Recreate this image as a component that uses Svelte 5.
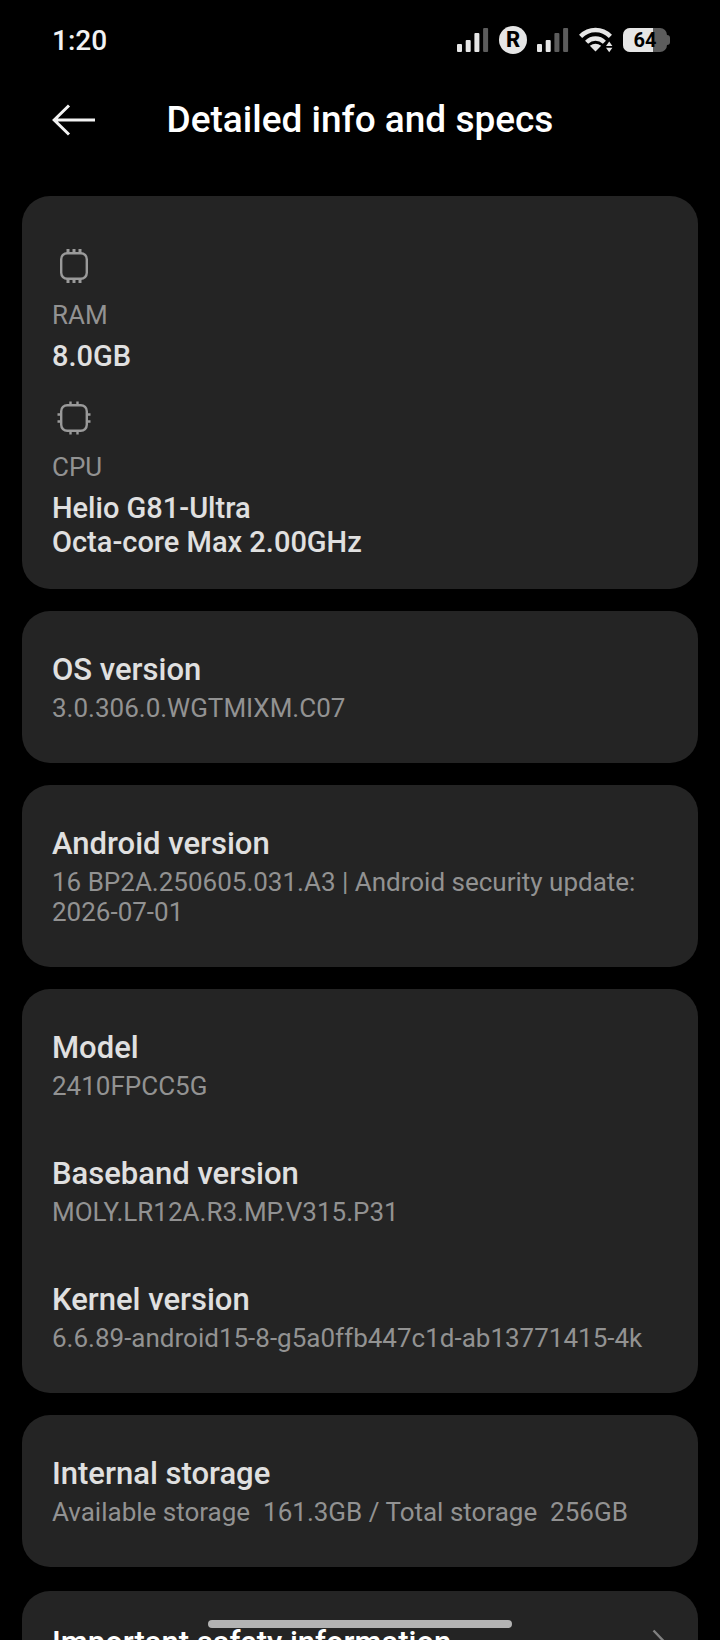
<script lang="ts">
    type Item = { title: string; value: string };

    const battery: number = 64;
    const signals: number[] = [3, 2];
    const barHeights: number[] = [8, 12, 19, 24];

    const cards: Item[][] = [
        [{ title: "OS version", value: "3.0.306.0.WGTMIXM.C07" }],
        [{ title: "Android version", value: "16 BP2A.250605.031.A3 | Android security update: 2026-07-01" }],
        [
            { title: "Model", value: "2410FPCC5G" },
            { title: "Baseband version", value: "MOLY.LR12A.R3.MP.V315.P31" },
            { title: "Kernel version", value: "6.6.89-android15-8-g5a0ffb447c1d-ab13771415-4k" }
        ],
        [{ title: "Internal storage", value: "Available storage  161.3GB / Total storage  256GB" }]
    ];
</script>

{#snippet signal(level: number)}
    <svg width="32" height="24" viewBox="0 0 32 24" aria-hidden="true">
        {#each barHeights as h, i}
            <rect x={i * 8.7} y={24 - h} width="5" height={h} rx="1" fill={i < level ? "#e6e6e6" : "#5c5c5c"} />
        {/each}
    </svg>
{/snippet}

<div class="screen">
    <div class="status">
        <span class="time">1:20</span>
        <div class="icons">
            {@render signal(signals[0])}
            <span class="roaming">R</span>
            {@render signal(signals[1])}
            <svg class="wifi" width="34" height="26" viewBox="0 0 34 26" aria-hidden="true">
                <g fill="none" stroke="#e6e6e6" stroke-width="4.4">
                    <path d="M1.6 9.4C10 0.9 23 0.9 31.4 9.4" />
                    <path d="M7.6 15.2C12.7 10.2 20.3 10.2 25.4 15.2" />
                </g>
                <path d="M16.5 24.4L10.8 18.8Q16.5 14.6 22.2 18.8Z" fill="#e6e6e6" />
                <path d="M30.5 12.5L36 20L30.5 26H28L24 20Z" fill="#000" />
                <path d="M30.2 14.6L33.4 19H27ZM27 20.8H33.4L30.2 25.2Z" fill="#e6e6e6" />
            </svg>
            <div class="battery">
                <div class="cell">
                    <div class="level" style="width: {battery + 4}%"></div>
                    <span class="percent">{battery}</span>
                </div>
                <div class="tip"></div>
            </div>
        </div>
    </div>

    <header>
        <button class="back" aria-label="Back">
            <svg width="44" height="32" viewBox="0 0 44 32" fill="none" stroke="#f2f2f2" stroke-width="3">
                <path d="M17 1.5L2.2 16L17 30.5M2.2 16H43" />
            </svg>
        </button>
        <h1>Detailed info and specs</h1>
    </header>

    <main>
        <section class="card specs">
            <div class="spec">
                <svg width="44" height="44" viewBox="0 0 44 44" fill="none" stroke="#9a9a9a" stroke-width="2.4" aria-hidden="true">
                    <rect x="9.2" y="9.2" width="25.6" height="25.6" rx="6" />
                    <path d="M16 5V9M22 5V9M28 5V9M16 35V39M22 35V39M28 35V39" stroke-width="3" />
                </svg>
                <p class="label">RAM</p>
                <p class="value">8.0GB</p>
            </div>
            <div class="spec">
                <svg width="44" height="44" viewBox="0 0 44 44" fill="none" stroke="#9a9a9a" stroke-width="2.4" aria-hidden="true">
                    <rect x="9.2" y="9.2" width="25.6" height="25.6" rx="6" />
                    <path d="M18.5 5.5V9M25.5 5.5V9M18.5 35V38.5M25.5 35V38.5M5.5 18.5H9M5.5 25.5H9M35 18.5H38.5M35 25.5H38.5" />
                </svg>
                <p class="label">CPU</p>
                <p class="value">Helio G81-Ultra<br />Octa-core Max 2.00GHz</p>
            </div>
        </section>

        {#each cards as items}
            <section class="card">
                {#each items as item}
                    <div class="item">
                        <h2>{item.title}</h2>
                        <p>{item.value}</p>
                    </div>
                {/each}
            </section>
        {/each}

        <a class="card link" href="#safety">
            <h2>Important safety information</h2>
            <svg width="16" height="28" viewBox="0 0 16 28" fill="none" stroke="#808080" stroke-width="2.4" aria-hidden="true">
                <path d="M1.5 1.5L13.5 14L1.5 26.5" />
            </svg>
        </a>
    </main>

    <div class="home-bar"></div>
</div>

<style>
    :global(body) {
        background: #000;
    }
    .screen {
        position: relative;
        height: 100vh;
        overflow: hidden;
        background: #000;
        color: #e0e0e0;
        font-family: Roboto, sans-serif;
    }
    h1, h2, p {
        margin: 0;
        font-weight: 500;
    }
    .status {
        display: flex;
        align-items: center;
        justify-content: space-between;
        height: 80px;
        padding: 0 50px 0 52px;
    }
    .time {
        font-size: 28px;
        font-weight: 500;
        color: #f2f2f2;
    }
    .icons {
        display: flex;
        align-items: center;
        gap: 10px;
    }
    .roaming {
        width: 28px;
        height: 28px;
        border-radius: 50%;
        background: #e6e6e6;
        color: #000;
        font-size: 22px;
        font-weight: 800;
        line-height: 28px;
        text-align: center;
    }
    .wifi {
        overflow: visible;
    }
    .battery {
        display: flex;
        align-items: center;
    }
    .cell {
        position: relative;
        width: 44px;
        height: 24px;
        border-radius: 7px;
        overflow: hidden;
        background: #5c5c5c;
    }
    .level {
        height: 100%;
        background: #e6e6e6;
    }
    .percent {
        position: absolute;
        inset: 0;
        color: #000;
        font-size: 20px;
        font-weight: 700;
        line-height: 25px;
        text-align: center;
    }
    .tip {
        width: 3px;
        height: 10px;
        border-radius: 0 3px 3px 0;
        background: #5c5c5c;
    }
    header {
        display: grid;
        grid-template-columns: 44px 1fr 44px;
        align-items: center;
        height: 80px;
        padding: 0 52px;
        margin-bottom: 36px;
    }
    .back {
        display: flex;
        padding: 0;
        border: none;
        background: none;
        cursor: pointer;
    }
    h1 {
        color: #fff;
        font-size: 37px;
        line-height: 44px;
        text-align: center;
    }
    main {
        display: flex;
        flex-direction: column;
        gap: 22px;
        padding: 0 22px;
    }
    .card {
        padding: 13px 30px;
        border-radius: 28px;
        background: #242424;
    }
    .specs {
        display: flex;
        flex-direction: column;
        gap: 23px;
        padding: 48px 30px 30px;
    }
    .spec svg {
        display: block;
        margin-bottom: 12px;
    }
    .label, .item p {
        color: #929292;
        font-size: 26px;
        font-weight: 400;
        line-height: 30px;
    }
    .label {
        margin-bottom: 9px;
    }
    .value {
        font-size: 29px;
        line-height: 34px;
    }
    .item {
        padding: 28px 0 27px;
    }
    .item p {
        margin-top: 5px;
        white-space: pre-wrap;
    }
    h2 {
        font-size: 31px;
        line-height: 36px;
    }
    .link {
        display: flex;
        align-items: center;
        justify-content: space-between;
        margin-top: 2px;
        padding: 34px 30px;
        color: #fff;
        text-decoration: none;
    }
    .home-bar {
        position: absolute;
        bottom: 12px;
        left: 50%;
        width: 304px;
        height: 8px;
        border-radius: 4px;
        background: #b3b3b3;
        transform: translateX(-50%);
    }
</style>
